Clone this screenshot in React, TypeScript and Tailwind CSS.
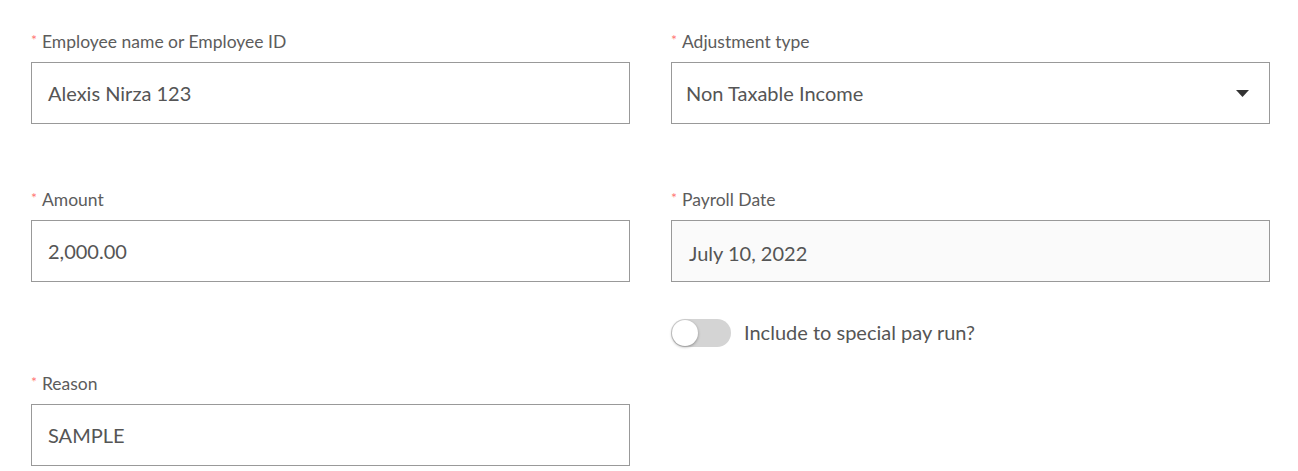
import { useState } from 'react'

// Field label with red asterisk
function Label({ text }: { text: string }) {
  return (
    <div className="h-[20px] mb-[10px] flex items-center text-[17.5px] text-[#5c5c5c] leading-none">
      <span className="text-[#ff7875] mr-[5px] text-[14px] self-start mt-[1px]">*</span>
      {text}
    </div>
  )
}

function TextBox({ value, muted }: { value: string; muted?: boolean }) {
  return (
    <div
      className={
        'h-[62px] border border-[#999999] flex items-center px-[16px] text-[20px] text-[#555555] ' +
        (muted ? 'bg-[#fafafa] pt-[4px] pl-[17px]' : 'bg-white')
      }
    >
      {value}
    </div>
  )
}

export default function App() {
  const [special, setSpecial] = useState(false)

  return (
    <main
      className="w-[1298px] h-[471px] bg-white pt-[32px] pl-[31px] overflow-hidden"
      style={{ fontFamily: '"Lato", "Open Sans", sans-serif' }}
    >
      <div className="grid grid-cols-[599px_599px] gap-x-[41px]">
        {/* Employee */}
        <div>
          <Label text="Employee name or Employee ID" />
          <TextBox value="Alexis Nirza 123" />
        </div>

        {/* Adjustment type */}
        <div>
          <Label text="Adjustment type" />
          <div className="h-[62px] border border-[#999999] flex items-center justify-between pl-[14px] pr-[20px] text-[20px] text-[#555555]">
            <span>Non Taxable Income</span>
            <svg width="13" height="7" viewBox="0 0 13 7">
              <path d="M0 0 H13 L6.5 7 Z" fill="#333333" />
            </svg>
          </div>
        </div>

        {/* Amount */}
        <div className="mt-[66px]">
          <Label text="Amount" />
          <TextBox value="2,000.00" />
        </div>

        {/* Payroll date + toggle */}
        <div className="mt-[66px]">
          <Label text="Payroll Date" />
          <TextBox value="July 10, 2022" muted />
          <div className="mt-[37px] flex items-center gap-[13px]">
            <button
              onClick={() => setSpecial(!special)}
              className={
                'relative w-[60px] h-[28px] rounded-full ' + (special ? 'bg-[#1890ff]' : 'bg-[#d4d4d4]')
              }
            >
              <span
                className={
                  'absolute top-[1px] w-[26px] h-[26px] rounded-full bg-white shadow-[0_1px_3px_rgba(0,0,0,0.35)] ' +
                  (special ? 'left-[33px]' : 'left-[1px]')
                }
              />
            </button>
            <span className="text-[20px] text-[#555555] -mt-[2px]">Include to special pay run?</span>
          </div>
        </div>

        {/* Reason */}
        <div className="mt-[27px]">
          <Label text="Reason" />
          <TextBox value="SAMPLE" />
        </div>
      </div>
    </main>
  )
}
